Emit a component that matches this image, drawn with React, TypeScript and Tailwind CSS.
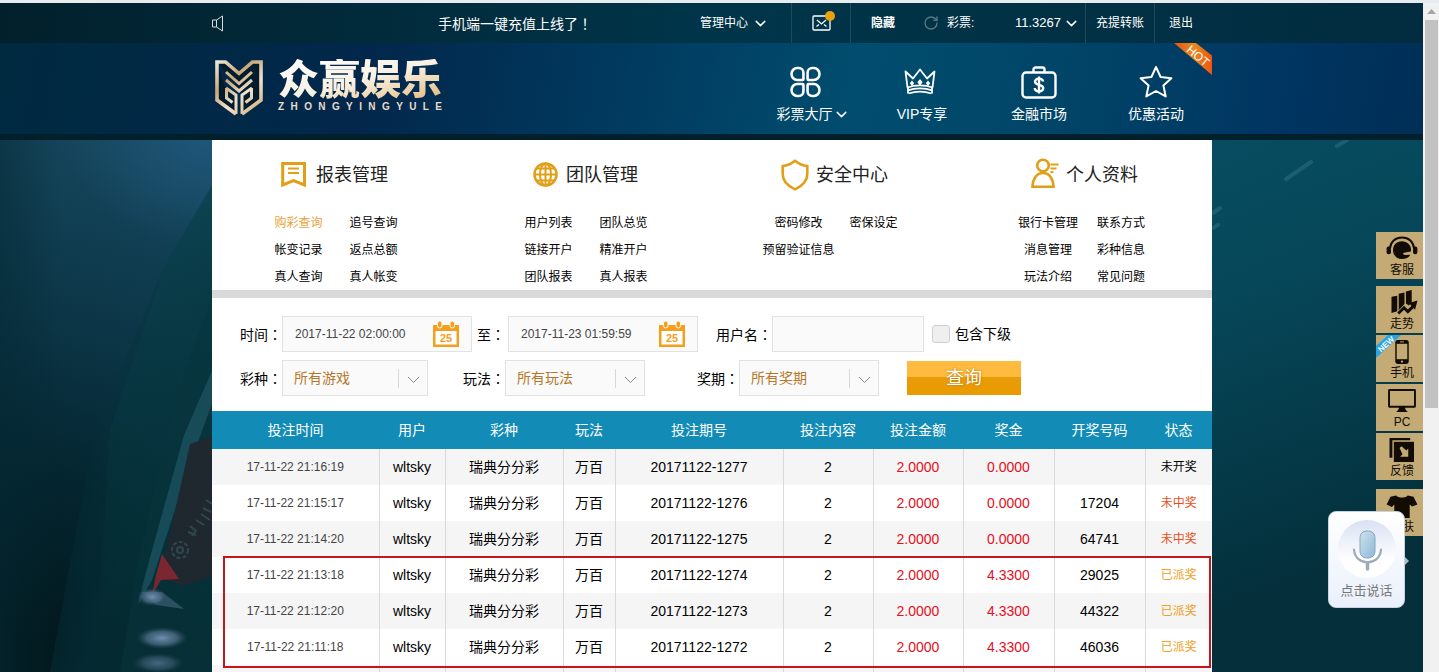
import React from 'react';
import { ChevronDown, RotateCw } from 'lucide-react';

interface MenuSection {
    title: string;
    icon: React.ReactNode;
    grid: string;
    links: string[];
}

interface Bet {
    time: string;
    issue: string;
    prize: string;
    code: string;
    status: string;
}

const BookmarkIcon = () => (
    <svg width="25" height="25" viewBox="0 0 25 25" fill="none" stroke="#e09f17" strokeWidth="3">
        <path d="M2 1.5h21.5v21.5L12.5 18.5 1.7 23V1.5z" />
        <path d="M7 6.5h11M7 11h11" strokeWidth="2" />
    </svg>
);

const GlobeIcon = () => (
    <svg width="27" height="25" viewBox="-2 0 27 25" fill="none" stroke="#e09f17" strokeWidth="2">
        <circle cx="12.5" cy="12.5" r="11" strokeWidth="2.5" />
        <ellipse cx="12.5" cy="12.5" rx="5.5" ry="11" />
        <path d="M12.5 1v23M1.5 12.5h22M3.5 6.5h18M3.5 18.5h18" />
    </svg>
);

const ShieldIcon = () => (
    <svg width="28" height="32" viewBox="0 0 28 32" fill="none" stroke="#e09f17" strokeWidth="2.6">
        <path d="M14 1.8c3.5 2.8 7.5 5 12.3 5.300v8c0 6.500-4.500 11.800-12.300 15.300C6.200 26.900 1.700 21.600 1.700 15.100v-8C6.500 6.800 10.500 4.600 14 1.800z" />
    </svg>
);

const PersonIcon = () => (
    <svg width="28" height="34" viewBox="0 0 28 34" fill="none" stroke="#e09f17" strokeWidth="2.600">
        <circle cx="12" cy="7.500" r="5.800" />
        <path d="M1.500 28.800c.3-8.500 4.500-13.800 10.500-13.800s10.200 5.300 10.500 13.800z" />
        <path d="M19.500 6.500h8M19.500 10.500h6M19.500 14h3" strokeWidth="2" />
    </svg>
);

const CalendarIcon = () => (
    <svg className="shrink-0" width="26" height="26" viewBox="0 0 26 26">
        <rect x="0" y="4" width="26" height="22" fill="#f5a01c" />
        <rect x="2.500" y="10" width="21" height="13.500" fill="#fff" />
        <rect x="4.500" y="0" width="4.500" height="7" rx="2.200" fill="#f5a01c" stroke="#fafafa" strokeWidth="1" />
        <rect x="17" y="0" width="4.500" height="7" rx="2.200" fill="#f5a01c" stroke="#fafafa" strokeWidth="1" />
        <text x="13" y="21" textAnchor="middle" fontSize="11" fontWeight="700" fill="#f5a01c">25</text>
    </svg>
);

const CloverIcon = () => {
    const petal = 'M7 1.5h1.500a4.500 4.500 0 0 1 4.500 4.500V12a1 1 0 0 1-1 1H7a5.500 5.500 0 0 1-5.500-5.500V7A5.500 5.500 0 0 1 7 1.500z';
    return (
        <svg width="31" height="32" viewBox="0 0 30 30" fill="none" stroke="#fff" strokeWidth="2.500">
            <path d={petal} />
            <path d={petal} transform="translate(30 0) scale(-1 1)" />
            <path d={petal} transform="translate(0 30) scale(1 -1)" />
            <path d={petal} transform="translate(30 30) scale(-1 -1)" />
        </svg>
    );
};

const CrownIcon = () => (
    <svg className="-ml-1" width="32" height="28" viewBox="0 0 32 28" fill="none" stroke="#fff" strokeWidth="1.800" strokeLinejoin="round">
        <path d="M3.500 19.500L1.500 3.500l7.500 7L16 1.500l7 9 7.500-7-2 16c-7-2.800-18-2.800-25 0z" />
        <path d="M4 22.300c7-2.600 17-2.600 24 0M4.500 25.500c7-2.400 16-2.400 23 0M4 19.500v6M28 19.500v6" />
        <path d="M16 11l2.600 3.300-2.600 3.300-2.600-3.300zM8 12.500l2.200 2.800L8 18.100l-2.200-2.800zM24 12.500l2.200 2.800-2.200 2.800-2.200-2.800z" fill="#fff" stroke="none" />
    </svg>
);

const CaseIcon = () => (
    <svg width="36" height="33" viewBox="0 0 36 33" fill="none" stroke="#fff" strokeWidth="2.400">
        <rect x="1.500" y="6.500" width="33" height="25" rx="3.500" />
        <path d="M12.500 6V3.500a2 2 0 0 1 2-2h7a2 2 0 0 1 2 2V6" />
        <path d="M22 15.500c0-1.800-1.700-2.900-4-2.900s-4 1.100-4 3c0 4.300 8.200 2.200 8.200 6.500 0 2-1.800 3.200-4.200 3.200s-4.200-1.200-4.200-3.200M18 10.500v17" strokeWidth="2.400" />
    </svg>
);

const StarIcon = () => (
    <svg width="34" height="34" viewBox="0 0 34 34" fill="none" stroke="#fff" strokeWidth="2" strokeLinejoin="round">
        <path d="M17 2l4.600 10 10.800 1.200-8 7.300 2.300 10.900L17 26l-9.700 5.400 2.300-10.900-8-7.300L12.400 12z" />
    </svg>
);

const HeadsetIcon = () => (
    <svg width="32" height="26" viewBox="0 0 32 26" fill="#120c04">
        <path d="M3.500 13C4 6 9 1.500 16 1.500S28 6 28.500 13" fill="none" stroke="#120c04" strokeWidth="2" />
        <rect x="0" y="11" width="4.500" height="8" rx="2" />
        <rect x="27.500" y="11" width="4.500" height="8" rx="2" />
        <path d="M16 5.500c-5.800 0-9.300 3.800-9.300 9.200S10.500 24 16 24c4 0 7-1.500 8.700-4.500l-5.200.3c-2.500-.2-3.200-2-1.500-2.500l7.300-1.300c1-6-3.500-10.500-9.300-10.500z" />
    </svg>
);

const TrendIcon = () => (
    <svg className="ml-1" width="30" height="26" viewBox="0 0 30 26" fill="#120c04">
        <path d="M2 7l6-1v16l-6 2zM9.500 4l6-1.500v12L9.500 21zM17 1.500L23 0v13l-3 3-3-2z" />
        <path d="M9 24.500l6-6 4 4 6-6" fill="none" stroke="#120c04" strokeWidth="3" />
        <path d="M20 13.500l9-2.500-2.500 9.500z" />
    </svg>
);

const PhoneIcon = () => (
    <svg width="14" height="26" viewBox="0 0 14 26">
        <rect x="0" y="1" width="14" height="25" rx="2.500" fill="#120c04" />
        <rect x="1.500" y="5" width="11" height="16" fill="#c4ab76" />
        <path d="M5 3h4" stroke="#c4ab76" />
        <circle cx="7" cy="23.500" r="1.200" fill="#c4ab76" />
    </svg>
);

const MonitorIcon = () => (
    <svg width="30" height="26" viewBox="0 0 30 26" fill="#120c04">
        <path d="M2 1h26a1.500 1.500 0 0 1 1.500 1.500V19A1.500 1.500 0 0 1 28 20.500H2A1.500 1.500 0 0 1 .5 19V2.500A1.500 1.500 0 0 1 2 1zm.500 2v15.500h25V3zM12 20.500h6l1 2.500 2 2H9L11 23z" fillRule="evenodd" />
    </svg>
);

const FeedbackIcon = () => (
    <svg width="26" height="26" viewBox="0 0 26 26" fill="#120c04">
        <path d="M0 1h21.500v2.500H3v18H0z" />
        <rect x="4.500" y="5" width="21" height="21" />
        <path d="M10.500 11.500l2-2 5 4.500 2-2v8.500h-8.500l2.500-2.500z" fill="#c4ab76" />
    </svg>
);

const ShirtIcon = () => (
    <svg width="32" height="26" viewBox="0 0 32 26" fill="#120c04">
        <path d="M10 2.500c2 2.800 10 2.800 12 0l6 1.500 4 8-5.500 2L24 12v14H8V12l-2.500 2.500L0 12l4-8z" />
    </svg>
);

const MENU: MenuSection[] = [
    {
        title: '报表管理',
        icon: <BookmarkIcon />,
        grid: 'grid-cols-[75px_75px]',
        links: ['购彩查询', '追号查询', '帐变记录', '返点总额', '真人查询', '真人帐变'],
    },
    {
        title: '团队管理',
        icon: <GlobeIcon />,
        grid: 'grid-cols-[75px_75px]',
        links: ['用户列表', '团队总览', '链接开户', '精准开户', '团队报表', '真人报表'],
    },
    {
        title: '安全中心',
        icon: <ShieldIcon />,
        grid: 'grid-cols-[75px_75px]',
        links: ['密码修改', '密保设定', '预留验证信息'],
    },
    {
        title: '个人资料',
        icon: <PersonIcon />,
        grid: 'grid-cols-[74px_72px]',
        links: ['银行卡管理', '联系方式', '消息管理', '彩种信息', '玩法介绍', '常见问题'],
    },
];

const COLUMNS = [
    { label: '投注时间', width: 'w-[167px]' },
    { label: '用户', width: 'w-[66px]' },
    { label: '彩种', width: 'w-[118px]' },
    { label: '玩法', width: 'w-[52px]' },
    { label: '投注期号', width: 'w-[168px]' },
    { label: '投注内容', width: 'w-[90px]' },
    { label: '投注金额', width: 'w-[90px]' },
    { label: '奖金', width: 'w-[91px]' },
    { label: '开奖号码', width: 'w-[91px]' },
    { label: '状态', width: 'w-[67px]' },
];

const BETS: Bet[] = [
    { time: '17-11-22 21:16:19', issue: '20171122-1277', prize: '0.0000', code: '', status: '未开奖' },
    { time: '17-11-22 21:15:17', issue: '20171122-1276', prize: '0.0000', code: '17204', status: '未中奖' },
    { time: '17-11-22 21:14:20', issue: '20171122-1275', prize: '0.0000', code: '64741', status: '未中奖' },
    { time: '17-11-22 21:13:18', issue: '20171122-1274', prize: '4.3300', code: '29025', status: '已派奖' },
    { time: '17-11-22 21:12:20', issue: '20171122-1273', prize: '4.3300', code: '44322', status: '已派奖' },
    { time: '17-11-22 21:11:18', issue: '20171122-1272', prize: '4.3300', code: '46036', status: '已派奖' },
];

const STATUS_COLORS: Record<string, string> = {
    未开奖: 'text-black',
    未中奖: 'text-[#e8501c]',
    已派奖: 'text-[#ef9f22]',
};

const Scene = () => (
    <svg className="absolute inset-0 h-full w-full" viewBox="0 0 1424 532" preserveAspectRatio="none" aria-hidden="true">
        <defs>
            <linearGradient id="leftBase" gradientUnits="userSpaceOnUse" x1="190" y1="0" x2="40" y2="500">
                <stop offset="0" stopColor="#17485f" />
                <stop offset="0.350" stopColor="#0d384a" />
                <stop offset="0.700" stopColor="#04252f" />
                <stop offset="1" stopColor="#02181d" />
            </linearGradient>
            <linearGradient id="slope" gradientUnits="userSpaceOnUse" x1="210" y1="60" x2="120" y2="500">
                <stop offset="0" stopColor="#0b4552" />
                <stop offset="0.500" stopColor="#063740" />
                <stop offset="1" stopColor="#042a2f" />
            </linearGradient>
            <linearGradient id="slopeFade" gradientUnits="userSpaceOnUse" x1="60" y1="300" x2="150" y2="330">
                <stop offset="0" stopColor="#05303a" stopOpacity="0" />
                <stop offset="1" stopColor="#05303a" />
            </linearGradient>
            <linearGradient id="rightBase" x1="0" y1="0" x2="0.500" y2="1">
                <stop offset="0" stopColor="#085168" />
                <stop offset="0.500" stopColor="#06485a" />
                <stop offset="1" stopColor="#042f3b" />
            </linearGradient>
            <radialGradient id="snow">
                <stop offset="0" stopColor="#6f8fb0" />
                <stop offset="0.600" stopColor="#54708c" stopOpacity="0.700" />
                <stop offset="1" stopColor="#2c4a5c" stopOpacity="0" />
            </radialGradient>
            <radialGradient id="glow">
                <stop offset="0" stopColor="#23608a" stopOpacity="0.600" />
                <stop offset="1" stopColor="#23608a" stopOpacity="0" />
            </radialGradient>
            <linearGradient id="shade" gradientUnits="userSpaceOnUse" x1="0" y1="0" x2="60" y2="0">
                <stop offset="0" stopColor="#042a35" stopOpacity="0.500" />
                <stop offset="1" stopColor="#042a35" stopOpacity="0" />
            </linearGradient>
        </defs>
        <rect width="720" height="532" fill="url(#leftBase)" />
        <rect width="60" height="532" fill="url(#shade)" />
        <ellipse cx="205" cy="0" rx="140" ry="110" fill="url(#glow)" />
        <path d="M214 42L165 125 95 290 50 532h180z" fill="url(#slopeFade)" opacity="0.700" />
        <path d="M214 42L165 125 110 290 95 532h135z" fill="url(#slope)" opacity="0.600" />
        <path d="M214 150L176 260 138 420 120 532h100z" fill="#07333c" opacity="0.500" />
        <path d="M214 226L184 295 146 432 138 465 152 440 188 330 214 258z" fill="#174b58" />
        <path d="M190 304l30-10v140l-38 12-22-8z" fill="#20282f" />
        <g fill="none" stroke="#34555c" strokeWidth="2" opacity="0.700">
            <circle cx="180" cy="410" r="8" strokeDasharray="4 2" />
            <circle cx="180" cy="410" r="3" />
            <path d="M188 392l8 3M190 386l6 5-4 5M196 380l8 5M201 374l9 6M203 368l8 4M206 360l8 5" />
        </g>
        <path d="M162 414l17 25-18 1-9 15 4-20z" fill="#8d2630" opacity="0.850" />
        <path d="M142 452l20 0 22 17-28-4z" fill="#4d6a86" opacity="0.550" />
        <ellipse cx="162" cy="498" rx="26" ry="11" fill="url(#snow)" />
        <ellipse cx="158" cy="523" rx="26" ry="10" fill="url(#snow)" opacity="0.600" />
        <ellipse cx="152" cy="457" rx="15" ry="9" fill="url(#snow)" />
        <rect x="720" width="704" height="532" fill="url(#rightBase)" />
        <g stroke="#4f8b98" strokeLinecap="round" strokeWidth="4" opacity="0.300">
            <path d="M1286 39l25-17M1337 6l10-6M1213 73l7-5M1213 88l5-3" />
        </g>
    </svg>
);

const Logo = () => (
    <a href="#" aria-label="众赢娱乐" className="flex items-start gap-3.5 pt-4 pl-0.5">
        <svg width="50" height="58" viewBox="0 0 50 58" fill="none" stroke="url(#gold)" strokeWidth="3">
            <defs>
                <linearGradient id="gold" gradientUnits="userSpaceOnUse" x1="0" y1="0" x2="50" y2="58">
                    <stop offset="0" stopColor="#f4efe6" />
                    <stop offset="0.350" stopColor="#c9a97c" />
                    <stop offset="0.600" stopColor="#efe3cf" />
                    <stop offset="1" stopColor="#c9a36c" />
                </linearGradient>
            </defs>
            <path d="M3 2h9l13 12L38 2h9v39L27.500 54V35l7.500-5v12M3 2v39l19.500 13V35L15 30v12" stroke="none" fill="#031c2c" />
            <path d="M22 55L3 41V3h8.500L25 14.500 38.500 3H47v38L28 55" strokeWidth="3.600" />
            <path d="M12 13l13 11.500L38 13" />
            <path d="M12 21l13 11 13-11" />
            <path d="M12 29l10 7v19M38 29l-10 7v19" />
            <path d="M12.500 29v10l6 4.500M37.500 29v10l-6 4.500" />
        </svg>
        <span className="flex flex-col">
            <span className="bg-linear-to-br from-white via-[#f8f1e4] to-[#e3b878] bg-clip-text text-[41px] leading-[42px] font-black text-transparent">
                众赢娱乐
            </span>
            <span className="flex justify-between text-[10px] leading-3 font-bold text-[#e6dccb]">
                {'ZHONGYINGYULE'.split('').map((letter, i) => (
                    <span key={i}>{letter}</span>
                ))}
            </span>
        </span>
    </a>
);

const TopBar = () => (
    <div className="bg-linear-to-r from-[#02202c] via-[#003549] to-[#022c40] text-xs text-white">
        <div className="mx-auto flex h-10 max-w-[1000px] items-center">
            <svg width="11" height="17" viewBox="0 0 11 17" fill="none" stroke="#d5dde0">
                <path d="M10.500 1v15l-6-4V5zM4.500 5H.500v7h4" />
            </svg>
            <p className="ml-[215px] text-sm">
                手机端一键充值上线了<span className="font-['Noto_Sans_CJK_TC',sans-serif]">！</span>
            </p>
            <nav className="ml-auto flex h-full items-stretch">
                <a href="#" className="flex w-[91px] items-center gap-1">
                    管理中心
                    <ChevronDown size={17} />
                </a>
                <a href="#" aria-label="消息" className="flex w-[59px] items-center justify-center border-l border-[#1c4c5c]">
                    <span className="relative">
                        <svg width="19" height="16" viewBox="0 0 19 16" fill="none" stroke="#fff" strokeWidth="1.300">
                            <rect x="1" y="1" width="17" height="14" rx="1" />
                            <path d="M5 5l4.500 4L14 5M4.500 11.500L7 9.500M14.500 11.500L12 9.500" />
                        </svg>
                        <span className="absolute -top-1 -right-1 h-2.5 w-2.5 rounded-full bg-[#eda00e]" />
                    </span>
                </a>
                <div className="flex w-[235px] items-center border-l border-[#1c4c5c] pl-5">
                    <button type="button" className="font-bold">隐藏</button>
                    <RotateCw size={16} className="ml-7 text-[#557985]" />
                    <span className="ml-2 w-[68px]">彩票:</span>
                    <span className="text-[13px]">11.3267</span>
                    <ChevronDown size={17} className="ml-0.5" />
                </div>
                <a href="#" className="flex w-[69px] items-center justify-center border-l border-[#1c4c5c]">充提转账</a>
                <a href="#" className="flex w-[58px] items-center border-l border-[#1c4c5c] pl-3.5">退出</a>
            </nav>
        </div>
    </div>
);

const NAV = [
    { label: '彩票大厅', icon: <CloverIcon />, more: true },
    { label: 'VIP专享', icon: <CrownIcon /> },
    { label: '金融市场', icon: <CaseIcon /> },
    { label: '优惠活动', icon: <StarIcon /> },
];

const Header = () => (
    <header className="border-b-[6px] border-[#01202b] bg-[linear-gradient(100deg,#002a40_0%,#02274b_26%,#01385d_42%,#014d6f_60%,#014568_74%,#003561_90%,#002e56_100%)]">
        <div className="relative mx-auto flex h-[91px] max-w-[1000px] justify-between">
            <Logo />
            <nav className="flex gap-[27px] pr-[11px]">
                {NAV.map((item) => (
                    <a key={item.label} href="#" className="flex w-[90px] flex-col items-center pt-5 text-sm text-white">
                        <span className="flex h-[38px] items-center">{item.icon}</span>
                        <span className={item.more ? '-mr-4 flex items-center mt-[3px]' : 'mt-[3px]'}>
                            {item.label}
                            {item.more && <ChevronDown size={17} />}
                        </span>
                    </a>
                ))}
            </nav>
            <svg className="absolute top-0 right-0" width="38" height="32" viewBox="0 0 38 32">
                <defs>
                    <linearGradient id="hot" x1="0" y1="0" x2="1" y2="0">
                        <stop offset="0" stopColor="#e9500f" />
                        <stop offset="0.500" stopColor="#e58c22" />
                        <stop offset="1" stopColor="#f0560f" />
                    </linearGradient>
                </defs>
                <path d="M0 0h22l16 12.500V32z" fill="url(#hot)" />
                <text x="24" y="17" textAnchor="middle" fontSize="12" fill="#fff" transform="rotate(40 24 13)">HOT</text>
            </svg>
        </div>
    </header>
);

// the TC face centres the full-width colon in its cell
const FieldLabel: React.FC<{ htmlFor: string; text: string; className?: string }> = ({ htmlFor, text, className }) => (
    <label htmlFor={htmlFor} className={className}>
        {text}
        <span className="font-['Noto_Sans_CJK_TC',sans-serif]">：</span>
    </label>
);

const DateField: React.FC<{ id: string; value: string }> = ({ id, value }) => (
    <div className="flex h-9 w-[190px] items-center border border-[#e2e2e2] bg-[#fafafa] px-3">
        <input id={id} type="text" defaultValue={value} className="w-full min-w-0 bg-transparent text-xs text-[#444] outline-none" />
        <CalendarIcon />
    </div>
);

const SelectField: React.FC<{ id: string; option: string; width: string }> = ({ id, option, width }) => (
    <div className={`relative ${width}`}>
        <select id={id} className="h-9 w-full appearance-none border border-[#e2e2e2] bg-[#fafafa] pl-[11px] text-sm text-[#b5782b] outline-none">
            <option>{option}</option>
        </select>
        <svg className="pointer-events-none absolute top-2 right-2" width="22" height="22" viewBox="0 0 22 22" fill="none">
            <path d="M.500 1v19" stroke="#d8d8d8" />
            <path d="M10 9l5.500 5.500L21 9" stroke="#888" />
        </svg>
    </div>
);

const Filters = () => (
    <form className="px-7 pt-[18px] pb-[15px] text-sm leading-5 text-black">
        <div className="flex items-center">
            <FieldLabel htmlFor="from" text="时间" />
            <DateField id="from" value="2017-11-22 02:00:00" />
            <FieldLabel htmlFor="to" text="至" className="mr-[3px] ml-[5px]" />
            <DateField id="to" value="2017-11-23 01:59:59" />
            <FieldLabel htmlFor="user" text="用户名" className="ml-[18px]" />
            <input id="user" type="text" className="h-9 w-[152px] border border-[#e2e2e2] bg-[#fafafa] px-3 outline-none" />
            <input id="sub" type="checkbox" className="ml-2 h-[18px] w-[18px] appearance-none rounded-[3px] border border-[#cfcfcf] bg-[#efefef]" />
            <label htmlFor="sub" className="ml-[5px]">包含下级</label>
        </div>
        <div className="mt-2 flex items-center">
            <FieldLabel htmlFor="game" text="彩种" />
            <SelectField id="game" option="所有游戏" width="w-[146px]" />
            <FieldLabel htmlFor="play" text="玩法" className="ml-[35px]" />
            <SelectField id="play" option="所有玩法" width="w-[140px]" />
            <FieldLabel htmlFor="issue" text="奖期" className="ml-[52px]" />
            <SelectField id="issue" option="所有奖期" width="w-[140px]" />
            <button
                type="button"
                className="ml-7 h-[34px] w-[114px] bg-[linear-gradient(#ffbb41_0%,#ffb93c_47%,#e89c08_47%,#ea9a00_100%)] text-lg leading-none text-white [text-shadow:0_0_2px_#a86a00]"
            >
                查询
            </button>
        </div>
    </form>
);

const BetTable = () => (
    <div className="relative">
        <table className="w-full table-fixed border-collapse text-center text-sm text-black">
            <thead>
                <tr className="h-[38px] bg-[#128cb7] text-white">
                    {COLUMNS.map((col) => (
                        <th key={col.label} className={`${col.width} p-0 font-normal`}>{col.label}</th>
                    ))}
                </tr>
            </thead>
            <tbody>
                {BETS.map((bet) => (
                    <tr key={bet.issue} className="h-9 divide-x divide-[#d9d9d9] bg-white odd:bg-[#f5f5f5]">
                        <td className="p-0 text-xs text-[#444]">{bet.time}</td>
                        <td className="p-0">wltsky</td>
                        <td className="p-0">瑞典分分彩</td>
                        <td className="p-0">万百</td>
                        <td className="p-0">{bet.issue}</td>
                        <td className="p-0">2</td>
                        <td className="p-0 text-[#e60f1e]">2.0000</td>
                        <td className="p-0 text-[#e60f1e]">{bet.prize}</td>
                        <td className="p-0">{bet.code}</td>
                        <td className={`p-0 text-xs ${STATUS_COLORS[bet.status]}`}>{bet.status}</td>
                    </tr>
                ))}
                <tr className="h-9 divide-x divide-[#d9d9d9] bg-[#f5f5f5]">
                    {COLUMNS.map((col) => (
                        <td key={col.label} />
                    ))}
                </tr>
            </tbody>
        </table>
        {/* paid-out rows */}
        <div className="pointer-events-none absolute top-[145px] right-px left-[11px] h-28 border-2 border-[#c4161c]" />
    </div>
);

const TOOLS = [
    { label: '客服', icon: <HeadsetIcon />, space: 'mb-[7px]' },
    { label: '走势', icon: <TrendIcon />, space: 'mb-0.5' },
    { label: '手机', icon: <PhoneIcon />, space: 'mb-0.5', isNew: true },
    { label: 'PC', icon: <MonitorIcon />, space: 'mb-0.5' },
    { label: '反馈', icon: <FeedbackIcon />, space: 'mb-[9px]' },
    { label: '皮肤', icon: <ShirtIcon />, space: '' },
];

const SideTools = () => (
    <div className="absolute top-[229px] right-px flex flex-col">
        {TOOLS.map((tool) => (
            <a
                key={tool.label}
                href="#"
                className={`relative flex h-[47px] w-[47px] flex-col items-center bg-[#c4ab76] pt-1 pl-[5px] text-xs leading-[18px] text-[#120c04] ${tool.space}`}
            >
                {tool.icon}
                <span>{tool.label}</span>
                {tool.isNew && (
                    <svg className="absolute top-0 left-0" width="25" height="23" viewBox="0 0 25 23">
                        <path d="M0 11L12 0h13L0 23z" fill="#2aa5e0" />
                        <text x="10" y="12" textAnchor="middle" fontSize="8" fontWeight="700" fill="#fff" transform="rotate(-42 10 9)">NEW</text>
                    </svg>
                )}
            </a>
        ))}
    </div>
);

const VoiceCard = () => (
    <button
        type="button"
        className="absolute top-[508px] right-[19px] flex h-[97px] w-[77px] flex-col items-center rounded-lg border border-[#c6d3e0] bg-linear-to-b from-white to-[#eaf0fb] pt-2 text-[13px] text-[#777]"
    >
        <svg width="58" height="58" viewBox="0 0 58 58" fill="none">
            <defs>
                <linearGradient id="disc" x1="0" y1="0" x2="0" y2="1">
                    <stop offset="0" stopColor="#d9e1f3" />
                    <stop offset="0.700" stopColor="#fff" />
                </linearGradient>
                <linearGradient id="mic" x1="0" y1="0" x2="1" y2="1">
                    <stop offset="0" stopColor="#cfe2ef" />
                    <stop offset="1" stopColor="#8fb8d6" />
                </linearGradient>
            </defs>
            <circle cx="29" cy="29" r="29" fill="url(#disc)" />
            <rect x="22" y="11" width="15" height="27" rx="6.500" fill="url(#mic)" stroke="#84a7c1" />
            <path d="M16 29.500c1 17 26 17 27 0M29.500 42.500v6" stroke="#9aabba" strokeWidth="2.200" strokeLinecap="round" />
            <path d="M29.500 44v5" stroke="#9aabba" strokeWidth="3.500" strokeLinecap="round" />
        </svg>
        <span className="mt-[3px]">点击说话</span>
        <span className="absolute top-[45px] -right-[5px] h-0 w-0 border-y-4 border-l-4 border-y-transparent border-l-[#a9bcc6]" />
    </button>
);

const ScrollBar = () => (
    <div className="relative -ml-px flex w-4 shrink-0 flex-col items-center bg-[#f1f1f1]" aria-hidden="true">
        <svg width="9" height="17" viewBox="0 0 9 17">
            <path d="M0 11l4.500-5L9 11z" fill="#a3a3a3" />
        </svg>
        <div className="h-[58%] w-[13px] bg-[#c1c1c1]" />
    </div>
);

const App: React.FC = () => {
    return (
        <div className="flex h-screen flex-col overflow-hidden border-t-[3px] border-[#e8ecf1] font-['Liberation_Sans','Noto_Sans_CJK_SC',sans-serif]">
            <div className="flex min-h-0 flex-1">
                <main className="relative flex min-w-0 flex-1 flex-col">
                    <TopBar />
                    <Header />
                    <div className="relative min-h-0 flex-1 overflow-hidden">
                        <Scene />
                        <div className="relative mx-auto max-w-[1000px] bg-white">
                            <div className="grid h-[158px] grid-cols-4 border-b-8 border-[#d9d9d9]">
                                {MENU.map((section) => (
                                    <section key={section.title}>
                                        <h2 className="flex h-[69px] items-center text-lg text-[#222]">
                                            <span className="ml-[65px] flex w-[39px] justify-start pl-1">{section.icon}</span>
                                            {section.title}
                                        </h2>
                                        <div className={`ml-[49px] grid auto-rows-[27px] items-center text-center text-xs text-black ${section.grid}`}>
                                            {section.links.map((link) => (
                                                <a key={link} href="#" className={link === '购彩查询' ? 'text-[#e8a33c]' : ''}>{link}</a>
                                            ))}
                                        </div>
                                    </section>
                                ))}
                            </div>
                            <Filters />
                            <BetTable />
                        </div>
                    </div>
                    <SideTools />
                    <VoiceCard />
                </main>
                <ScrollBar />
            </div>
        </div>
    );
};

export default App;
